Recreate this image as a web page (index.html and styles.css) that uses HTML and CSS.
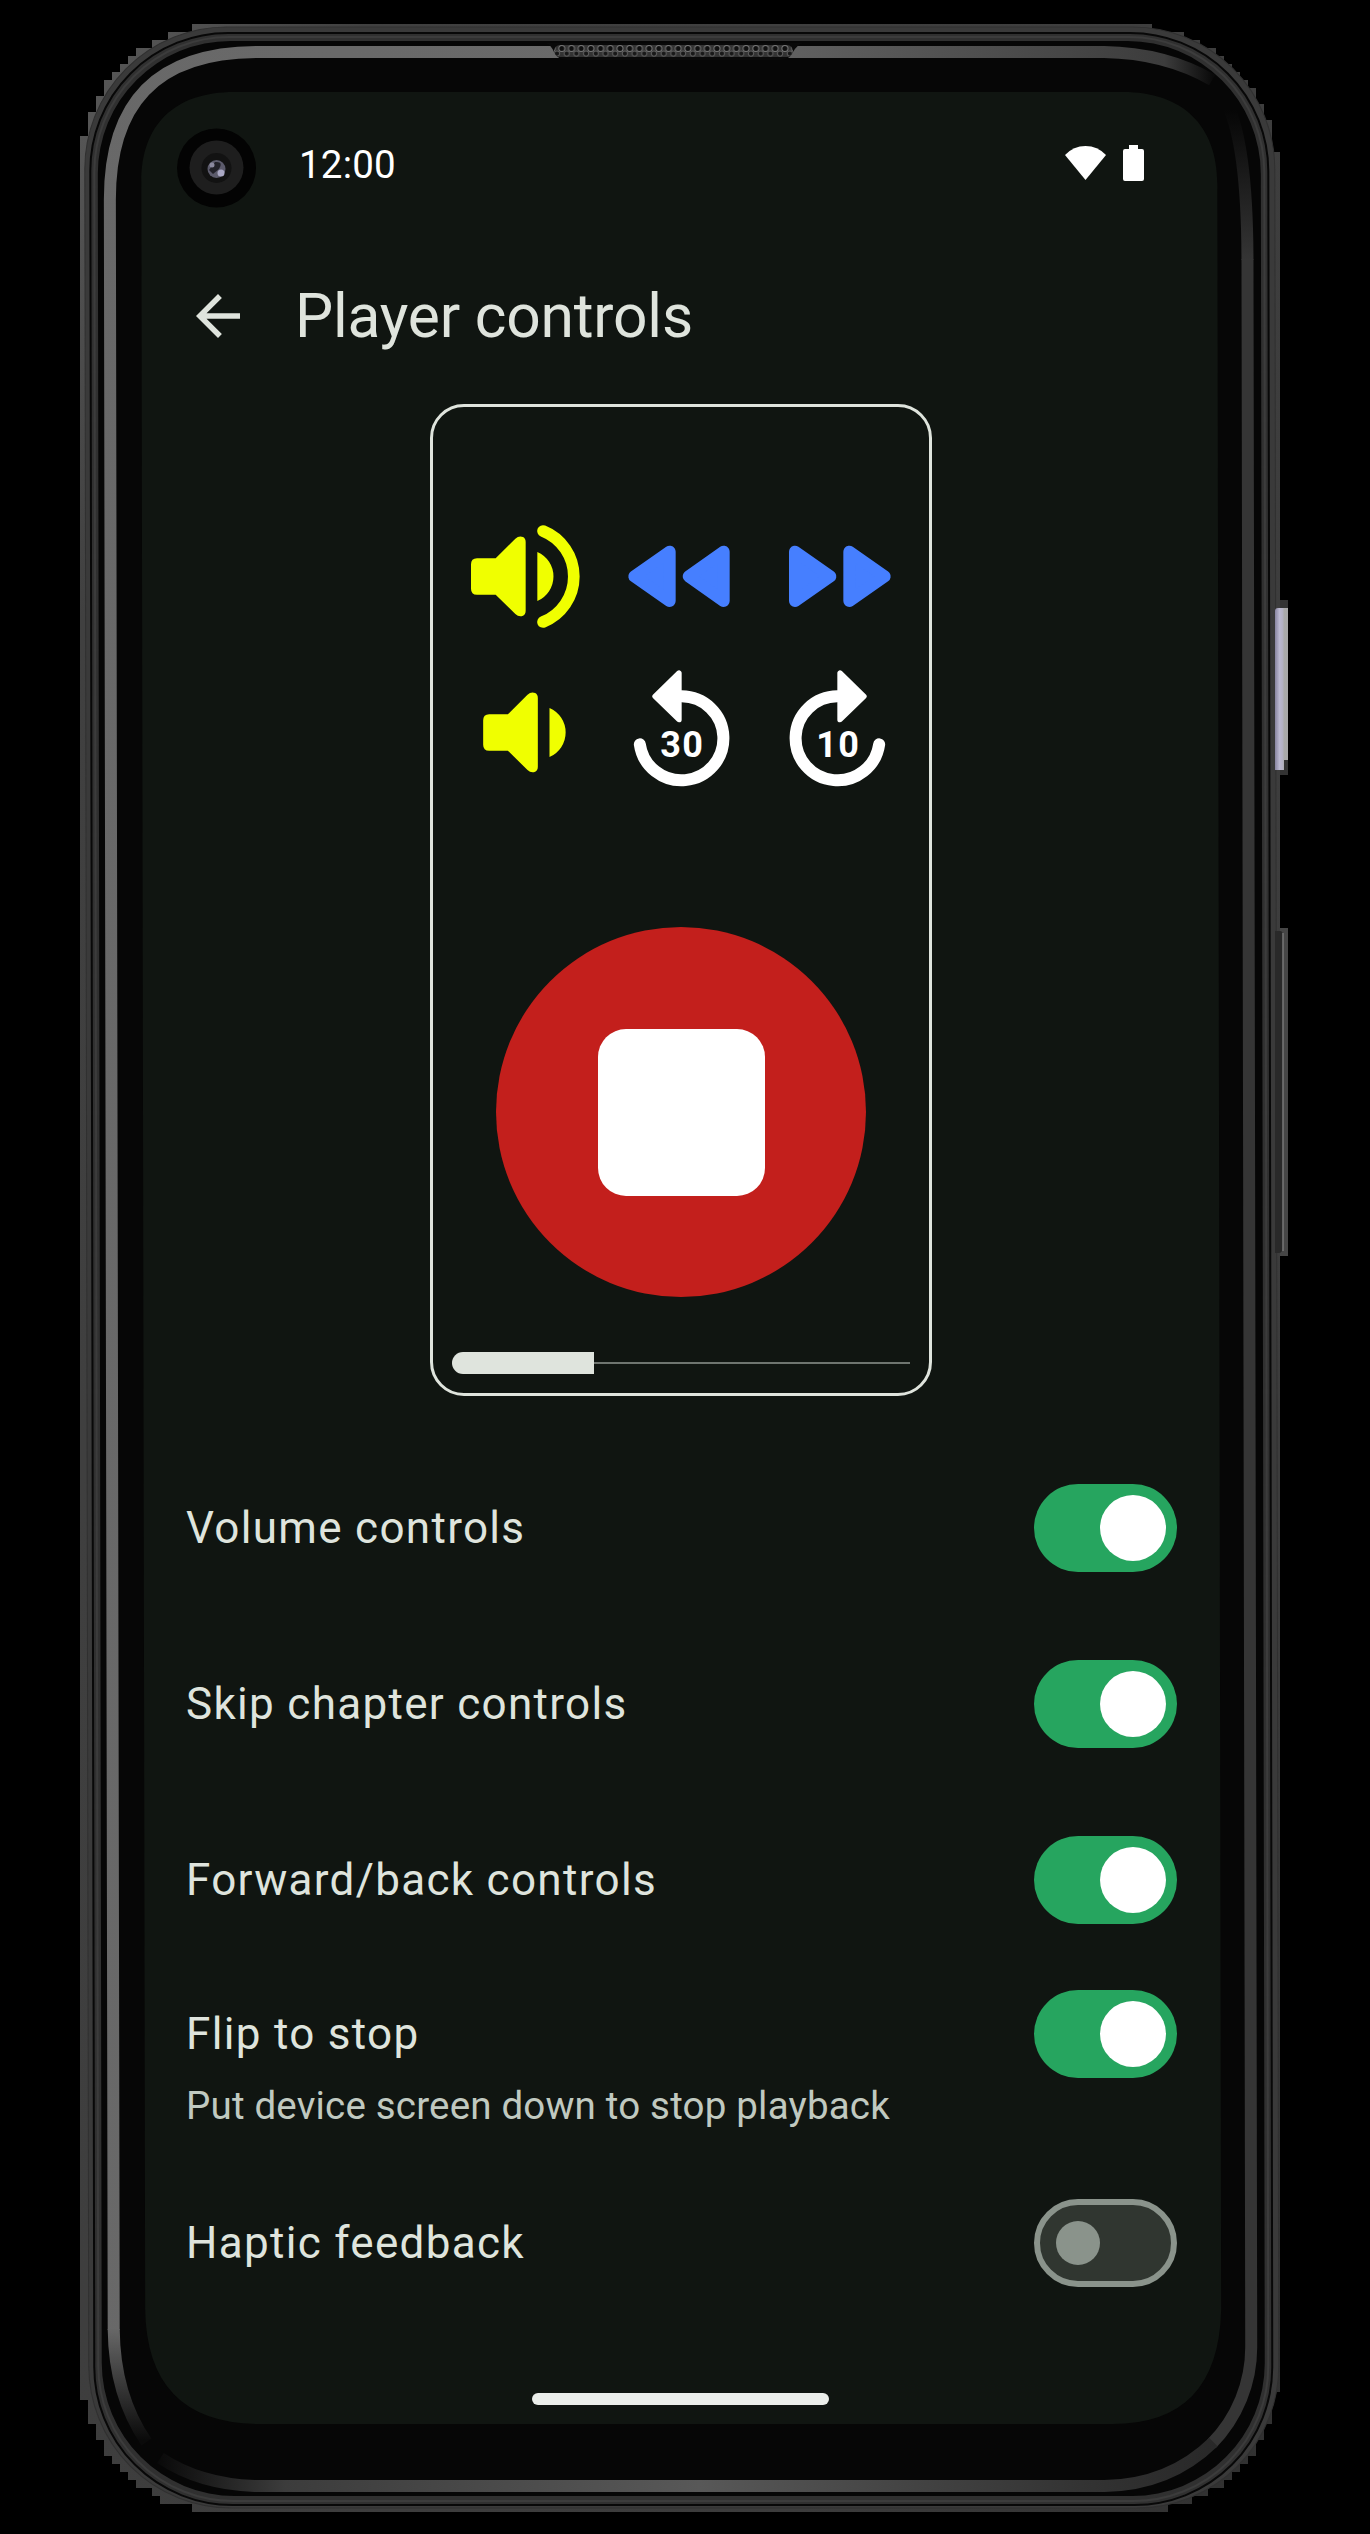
FILE: index.html
```html
<!DOCTYPE html>
<html lang="en">
<head>
<meta charset="utf-8">
<title>Player controls</title>
<link rel="stylesheet" href="styles.css">
</head>
<body>
<div class="device">
  <svg class="frame" viewBox="0 0 1370 2534" aria-hidden="true">
    <defs>
      <linearGradient id="edge" x1="0" y1="0" x2="1" y2="1">
        <stop offset="0" stop-color="#5a5a5a"/><stop offset=".12" stop-color="#404040"/><stop offset=".8" stop-color="#3c3c3c"/><stop offset="1" stop-color="#303030"/>
      </linearGradient>
      <linearGradient id="rimLeft" gradientUnits="userSpaceOnUse" x1="0" y1="0" x2="1370" y2="0">
        <stop offset="0" stop-color="#686868"/><stop offset=".5" stop-color="#6a6a6a"/><stop offset=".78" stop-color="#464646"/><stop offset=".85" stop-color="#3c3c3c"/><stop offset=".885" stop-color="#0a0a0a"/>
      </linearGradient>
      <linearGradient id="fadeLeft" gradientUnits="userSpaceOnUse" x1="0" y1="2328" x2="0" y2="2440">
        <stop offset="0" stop-color="#686868"/><stop offset="1" stop-color="#0a0a0a"/>
      </linearGradient>
      <linearGradient id="fadeRight" gradientUnits="userSpaceOnUse" x1="0" y1="110" x2="0" y2="260">
        <stop offset="0" stop-color="#060606"/><stop offset="1" stop-color="#353535"/>
      </linearGradient>
      <linearGradient id="fadeBottom" gradientUnits="userSpaceOnUse" x1="150" y1="0" x2="1240" y2="0">
        <stop offset="0" stop-color="#080808"/><stop offset=".12" stop-color="#3c3c3c"/><stop offset=".5" stop-color="#585858"/><stop offset=".85" stop-color="#333"/><stop offset="1" stop-color="#262626"/>
      </linearGradient>
      <linearGradient id="power" x1="0" y1="0" x2="1" y2="0">
        <stop offset="0" stop-color="#8784a0"/><stop offset=".35" stop-color="#bbb8d0"/><stop offset=".6" stop-color="#b3b1c2"/><stop offset=".7" stop-color="#aaa"/><stop offset="1" stop-color="#a8a8a8"/>
      </linearGradient>
      <pattern id="mesh" width="9.7" height="12" patternUnits="userSpaceOnUse" x="557" y="45">
        <rect width="9.7" height="12" fill="#333"/>
        <circle cx="4.8" cy="3.6" r="3" fill="#101010" stroke="#777" stroke-width="1"/>
        <circle cx="0" cy="8.6" r="2.6" fill="#181818" stroke="#5c5c5c" stroke-width="1"/>
        <circle cx="9.7" cy="8.6" r="2.6" fill="#181818" stroke="#5c5c5c" stroke-width="1"/>
      </pattern>
    </defs>
    <rect x="1275" y="600" width="13" height="175" fill="#333"/>
    <rect x="1275" y="928" width="13" height="328" fill="#464646"/>
    <path fill="url(#edge)" d="M192 24H1152V32H1184V40H1200V48H1216V56H1224V64H1232V72H1240V80H1248V88H1256V104H1264V120H1272V152H1280V2392H1272V2424H1264V2440H1256V2456H1248V2464H1240V2472H1232V2480H1224V2488H1208V2496H1192V2504H1168V2512H192V2504H160V2496H152V2488H136V2480H128V2472H120V2464H112V2456H104V2440H96V2424H88V2400H80V136H88V112H96V96H104V80H112V72H120V64H128V56H136V48H152V40H168V32H192Z"/>
    <g transform="matrix(1 0 .0018 1 0 0)">
      <rect x="84.500" y="27" width="1190" height="2481" rx="142" fill="#3a3a3a" stroke="#303030"/>
      <rect x="90" y="33" width="1178" height="2472" rx="138" fill="#303030" stroke="#080808" stroke-width="2"/>
      <rect x="94" y="37" width="1170" height="2464" rx="135" fill="none" stroke="#3c3c3c" stroke-width="2"/>
      <rect x="97.500" y="41" width="1163" height="2455" rx="133" fill="#060606"/>
      <g fill="none" stroke-width="12">
        <path stroke="url(#rimLeft)" d="M109.500 2330V200C109.500 106 153 52 258 52H1104Q1165 53 1212 80"/>
        <path stroke="url(#fadeLeft)" d="M109.500 2329Q110 2395 142 2442"/>
        <path stroke="url(#fadeRight)" d="M1227 104Q1247 145 1247 260"/>
        <path stroke="#353535" d="M1247 259V2346A138 138 0 0 1 1207 2444"/>
        <path stroke="url(#fadeBottom)" d="M1209 2442Q1165 2485 1100 2486H250Q195 2484 156 2458"/>
      </g>
      <path fill="#101511" d="M141 182C141 125 174 92 234 92H1123C1182 92 1217 125 1217 184V2310Q1214 2424 1108 2424H256Q142 2424 141 2308Z"/>
    </g>
    <path fill="#090909" d="M546 43H803Q797 45 793 52Q789 60 781 60H567Q558 60 554 52Q551 45 546 43Z"/>
    <rect x="554" y="45" width="239" height="12" rx="6" fill="url(#mesh)"/>
    <path d="M1275 611q0-3 3-3H1288V760H1284V770H1275Z" fill="url(#power)"/>
    <path d="M1275 931H1280Q1283 931 1283 936V1246Q1283 1253 1279 1253H1275Z" fill="#292929"/>
    <path d="M1283 933V1251" stroke="#777" stroke-width="1.500"/>
    <circle cx="216.500" cy="168" r="39.500" fill="#030303"/>
    <circle cx="216.500" cy="167.500" r="27" fill="#1e1e1e"/>
    <circle cx="216.500" cy="168" r="15" fill="#121212"/>
    <circle cx="216.500" cy="169" r="9" fill="#5c5b6c"/>
    <path d="M209 170L215 162Q224 161 219 169L213 174Z" fill="#222129"/>
    <circle cx="221" cy="173" r="3.500" fill="#aaa8c4"/><circle cx="212" cy="165" r="2.500" fill="#8b899f"/>
  </svg>

  <main class="screen">
    <header class="status">
      <span class="clock">12:00</span>
      <span class="status-icons">
        <svg class="wifi" viewBox="0 0 41 34"><path fill="#fff" d="M0 9Q8.500 0 20.500 0T41 9L20.500 34Z"/></svg>
        <svg class="battery" viewBox="0 0 21 36"><path fill="#fff" d="M6 0H15V4H19Q21 4 21 6V34Q21 36 19 36H2Q0 36 0 34V6Q0 4 2 4H6Z"/></svg>
      </span>
    </header>

    <div class="app-bar">
      <svg class="back" viewBox="0 0 24 24"><path fill="#dfe4dd" d="M20 11H7.830l5.590-5.590L12 4l-8 8 8 8 1.410-1.410L7.830 13H20z"/></svg>
      <h1 class="title">Player controls</h1>
    </div>

    <section class="preview">
      <div class="controls">
        <svg class="control" viewBox="84 327 468 468" fill="#f0ff00">
          <path id="speaker" d="M171 505H227L286 446Q297 436 309 441Q317 445 317 456V662Q317 673 309 677Q297 682 286 672L227 614H171Q153 614 153 596V523Q153 505 171 505ZM352 486A80 80 0 0 1 352 633Z"/>
          <path d="M369 423A147 147 0 0 1 369 696" fill="none" stroke="#f0ff00" stroke-width="35" stroke-linecap="round"/>
        </svg>
        <svg class="control" viewBox="552 327 468 468" fill="#467fff" stroke="#467fff" stroke-width="36" stroke-linejoin="round">
          <path d="M749 485V633L643 559ZM911 485V633L806 559Z"/>
        </svg>
        <svg class="control" viewBox="1020 327 468 468" fill="#467fff" stroke="#467fff" stroke-width="36" stroke-linejoin="round">
          <path d="M1125 485V633L1231 559ZM1288 485V633L1394 559Z"/>
        </svg>
        <svg class="control" viewBox="84 795 468 468" fill="#f0ff00"><use href="#speaker" x="36.500" y="468"/></svg>
        <svg class="control" viewBox="552 795 468 468" fill="#fff" stroke="#fff">
          <path d="M659.500 1063A126 126 0 1 0 785 919" fill="none" stroke-width="36" stroke-linecap="round"/>
          <path d="M777 849V989L705 919Z" stroke-width="16" stroke-linejoin="round"/>
          <text class="seconds" x="787" y="1101">30</text>
        </svg>
        <svg class="control" viewBox="1020 795 468 468" fill="#fff" stroke="#fff">
          <path d="M1377.500 1063A126 126 0 1 1 1252 919" fill="none" stroke-width="36" stroke-linecap="round"/>
          <path d="M1260 849V989L1332 919Z" stroke-width="16" stroke-linejoin="round"/>
          <text class="seconds" x="1255" y="1101">10</text>
        </svg>
      </div>
      <div class="stop"><div class="stop-mark"></div></div>
      <div class="progress"><div class="progress-done"></div><div class="progress-rest"></div></div>
    </section>

    <section class="settings">
      <div class="row"><span class="label">Volume controls</span><span class="switch on"><span class="thumb"></span></span></div>
      <div class="row"><span class="label">Skip chapter controls</span><span class="switch on"><span class="thumb"></span></span></div>
      <div class="row"><span class="label">Forward/back controls</span><span class="switch on"><span class="thumb"></span></span></div>
      <div class="row flip"><span class="label">Flip to stop</span><span class="switch on"><span class="thumb"></span></span></div>
      <p class="hint">Put device screen down to stop playback</p>
      <div class="row"><span class="label">Haptic feedback</span><span class="switch"><span class="thumb"></span></span></div>
    </section>

    <div class="home-bar"></div>
  </main>
</div>
</body>
</html>
```
FILE: styles.css
```css
* { box-sizing: border-box; }

body {
  margin: 0;
  background: #000;
  color: #dfe4dd;
  font-family: Roboto, sans-serif;
}

/* The hardware drawing and the screen share one grid cell. */
.device {
  display: grid;
  width: 1370px;
  height: 2534px;
}

.frame, .screen { grid-area: 1 / 1; }
.frame { width: 1370px; height: 2534px; }

.screen {
  display: flex;
  flex-direction: column;
  margin: 92px 152px 110px 142px;
}

.status {
  display: flex;
  justify-content: space-between;
  align-items: center;
  height: 144px;
  padding: 0 74px 0 157px;
}

.clock { padding-top: 2px; font-size: 38.5px; line-height: 46px; letter-spacing: .2px; color: #fff; }
.status-icons { display: flex; align-items: center; gap: 17px; padding-bottom: 2px; }
.wifi { width: 41px; height: 34px; }
.battery { width: 21px; height: 36px; }

.app-bar {
  display: flex;
  align-items: center;
  gap: 44px;
  height: 160px;
  padding-left: 43px;
}

.back { width: 66px; height: 66px; }
.title { margin: 0; font-size: 60.5px; line-height: 77px; letter-spacing: -.2px; font-weight: 400; }

.preview {
  display: flex;
  flex-direction: column;
  align-items: center;
  align-self: flex-start;
  width: 502px;
  height: 992px;
  margin: 8px 0 0 288px;
  padding: 92px 19px 19px;
  border: 3px solid #dfe4dd;
  border-radius: 34px;
}

.controls {
  display: grid;
  grid-template-columns: repeat(3, 156px);
  margin-left: 2px;
}

.control { display: block; width: 156px; height: 156px; }

.seconds {
  font-size: 108px;
  font-weight: 700;
  letter-spacing: 4px;
  text-anchor: middle;
  stroke: none;
}

.stop {
  display: flex;
  align-items: center;
  justify-content: center;
  width: 370px;
  height: 370px;
  margin-top: 116px;
  border-radius: 50%;
  background: #c31f1c;
}

.stop-mark { width: 167px; height: 167px; border-radius: 28px; background: #fff; }

.progress {
  display: flex;
  align-items: center;
  align-self: stretch;
  height: 22px;
  margin-top: auto;
}

.progress-done { width: 142px; height: 22px; border-radius: 11px 0 0 11px; background: #dfe4dd; }
.progress-rest { flex: 1; height: 2px; background: #6f7570; }

.settings { padding: 44px 41px 0 44px; }

.row {
  display: flex;
  align-items: center;
  justify-content: space-between;
  height: 176px;
}

.flip { height: 132px; padding-bottom: 0; }

.label { font-size: 44px; line-height: 66px; letter-spacing: 1.31px; }

.hint {
  margin: -22px 0 22px;
  font-size: 38.5px;
  line-height: 55px;
  letter-spacing: .19px;
  color: #c0c9c0;
}

.switch {
  display: flex;
  align-items: center;
  width: 143px;
  height: 88px;
  padding-left: 16px;
  border: 6px solid #8a938b;
  border-radius: 44px;
  background: #303630;
}

.thumb { width: 44px; height: 44px; border-radius: 50%; background: #8a938b; }

.switch.on {
  justify-content: flex-end;
  padding: 0 11px;
  border: 0;
  background: #26a55f;
}

.switch.on .thumb { width: 66px; height: 66px; background: #fff; }

.home-bar {
  align-self: center;
  width: 297px;
  height: 12px;
  margin: auto 0 19px;
  border-radius: 6px;
  background: #ebeeea;
}
```
